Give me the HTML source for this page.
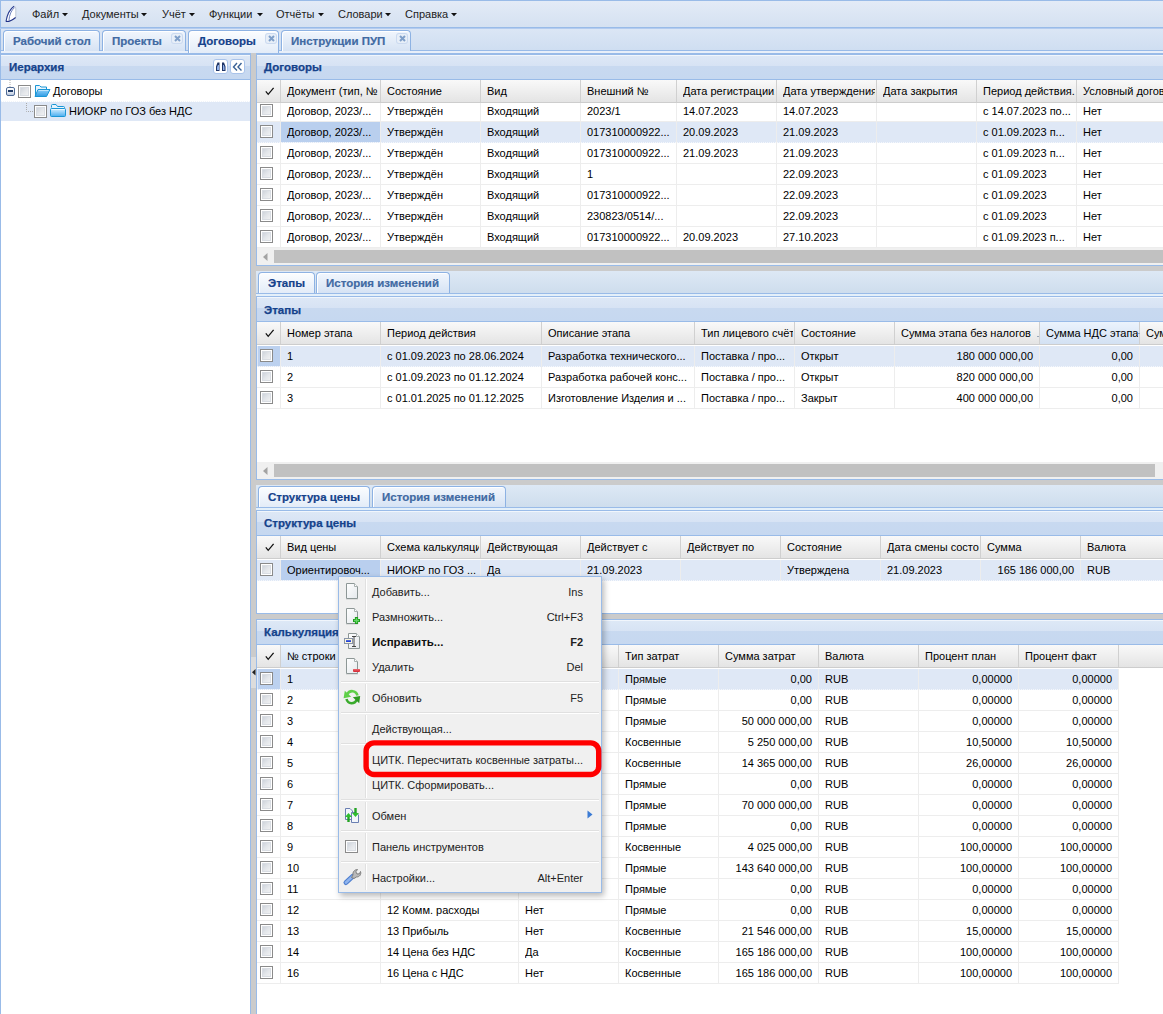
<!DOCTYPE html>
<html><head><meta charset="utf-8"><title>ui</title>
<style>
html,body{margin:0;padding:0;}
body{width:1163px;height:1014px;overflow:hidden;position:relative;background:#fff;font-family:"Liberation Sans",sans-serif;font-size:11px;color:#000;}
body>div{position:absolute;}
.t{line-height:13px;white-space:nowrap;}
.clip{overflow:hidden;}
</style></head><body>
<svg width="0" height="0" style="position:absolute"><defs><linearGradient id="fg" x1="0" y1="0" x2="0" y2="1"><stop offset="0" stop-color="#8fd0fb"/><stop offset="1" stop-color="#2f9be3"/></linearGradient><linearGradient id="fg2" x1="0" y1="0" x2="0" y2="1"><stop offset="0" stop-color="#d8efff"/><stop offset="1" stop-color="#4aaef0"/></linearGradient><linearGradient id="dg" x1="0" y1="0" x2="1" y2="1"><stop offset="0" stop-color="#ffffff"/><stop offset="1" stop-color="#e4e8ec"/></linearGradient></defs></svg>
<div style="left:0px;top:0px;width:1163px;height:27px;background:linear-gradient(#e3ebf7,#d5e1f1);border-top:1px solid #99bbe8;border-left:1px solid #99bbe8;box-sizing:border-box"></div>
<div style="left:0px;top:27px;width:1163px;height:1px;background:#99bbe8"></div>
<div style="left:0px;top:28px;width:1163px;height:1px;background:#b3cbef"></div>
<svg style="position:absolute;left:0px;top:0px" width="20" height="26" viewBox="0 0 20 26"><path d="M6 21.5C7 15 10 9 14 6.2C15.5 6.2 15.8 7.5 15.8 9V17.5C14 19.8 10 21.5 6 21.5Z" fill="#fff" stroke="#b9c2d2" stroke-width="0.9"/><path d="M6 21.5C7 15 10 9 14 6.2" fill="none" stroke="#2a3d92" stroke-width="1.1"/><path d="M9 20.2C9.3 15 11.3 10.2 14.6 7.5" fill="none" stroke="#4a63b0" stroke-width="0.8"/><path d="M6 21.5C9 21.8 12 20.5 15.6 17.5" fill="none" stroke="#1e2f86" stroke-width="1.1"/></svg>
<div class="t" style="left:32px;top:8px;color:#222;">Файл</div>
<div class="t" style="left:82px;top:8px;color:#222;">Документы</div>
<div class="t" style="left:162px;top:8px;color:#222;">Учёт</div>
<div class="t" style="left:209px;top:8px;color:#222;">Функции</div>
<div class="t" style="left:276px;top:8px;color:#222;">Отчёты</div>
<div class="t" style="left:338px;top:8px;color:#222;">Словари</div>
<div class="t" style="left:405px;top:8px;color:#222;">Справка</div>
<svg style="position:absolute;left:62px;top:13px" width="7" height="4"><path d="M0 0H6L3 3.2Z" fill="#111"/></svg>
<svg style="position:absolute;left:141px;top:13px" width="7" height="4"><path d="M0 0H6L3 3.2Z" fill="#111"/></svg>
<svg style="position:absolute;left:189px;top:13px" width="7" height="4"><path d="M0 0H6L3 3.2Z" fill="#111"/></svg>
<svg style="position:absolute;left:257px;top:13px" width="7" height="4"><path d="M0 0H6L3 3.2Z" fill="#111"/></svg>
<svg style="position:absolute;left:318px;top:13px" width="7" height="4"><path d="M0 0H6L3 3.2Z" fill="#111"/></svg>
<svg style="position:absolute;left:385px;top:13px" width="7" height="4"><path d="M0 0H6L3 3.2Z" fill="#111"/></svg>
<svg style="position:absolute;left:451px;top:13px" width="7" height="4"><path d="M0 0H6L3 3.2Z" fill="#111"/></svg>
<div style="left:0px;top:29px;width:1163px;height:21px;background:linear-gradient(#dbe6f5,#cfdef1);border-left:1px solid #99bbe8;box-sizing:border-box"></div>
<div style="left:0px;top:50px;width:1163px;height:1px;background:#99bbe8"></div>
<div style="left:0px;top:51px;width:1163px;height:2px;background:#e8eff9;border-left:1px solid #99bbe8;box-sizing:border-box"></div>
<div style="left:3px;top:30px;width:97px;height:21px;background:linear-gradient(#f1f6fd,#d6e3f4);border:1px solid #8db2e3;border-bottom:none;border-radius:4px 4px 0 0;box-sizing:border-box;box-shadow:inset 1px 1px 0 #fff"></div>
<div class="t" style="left:13px;top:35px;font-weight:bold;font-size:11.5px;color:#416aa3;-webkit-text-stroke:0.2px #416aa3;">Рабочий стол</div>
<div style="left:102px;top:30px;width:84px;height:21px;background:linear-gradient(#f1f6fd,#d6e3f4);border:1px solid #8db2e3;border-bottom:none;border-radius:4px 4px 0 0;box-sizing:border-box;box-shadow:inset 1px 1px 0 #fff"></div>
<div class="t" style="left:112px;top:35px;font-weight:bold;font-size:11.5px;color:#416aa3;-webkit-text-stroke:0.2px #416aa3;">Проекты</div>
<div style="left:172px;top:34px;width:10px;height:9px;border-radius:2px;background:#e8eff8;box-shadow:0 0 0 1px #cbdaf0"></div><svg style="position:absolute;left:174px;top:35px" width="7" height="7"><path d="M1 1L6 6M6 1L1 6" stroke="#7f9fc9" stroke-width="2"/></svg>
<div style="left:188px;top:30px;width:91px;height:23px;background:linear-gradient(#fbfdff,#e3ecf8);border:1px solid #8db2e3;border-bottom:none;border-radius:4px 4px 0 0;box-sizing:border-box;box-shadow:inset 1px 1px 0 #fff"></div>
<div class="t" style="left:198px;top:35px;font-weight:bold;font-size:11.5px;color:#15428b;-webkit-text-stroke:0.2px #15428b;">Договоры</div>
<div style="left:266px;top:34px;width:10px;height:9px;border-radius:2px;background:#e8eff8;box-shadow:0 0 0 1px #cbdaf0"></div><svg style="position:absolute;left:268px;top:35px" width="7" height="7"><path d="M1 1L6 6M6 1L1 6" stroke="#7f9fc9" stroke-width="2"/></svg>
<div style="left:281px;top:30px;width:130px;height:21px;background:linear-gradient(#f1f6fd,#d6e3f4);border:1px solid #8db2e3;border-bottom:none;border-radius:4px 4px 0 0;box-sizing:border-box;box-shadow:inset 1px 1px 0 #fff"></div>
<div class="t" style="left:291px;top:35px;font-weight:bold;font-size:11.5px;color:#416aa3;-webkit-text-stroke:0.2px #416aa3;">Инструкции ПУП</div>
<div style="left:397px;top:34px;width:10px;height:9px;border-radius:2px;background:#e8eff8;box-shadow:0 0 0 1px #cbdaf0"></div><svg style="position:absolute;left:399px;top:35px" width="7" height="7"><path d="M1 1L6 6M6 1L1 6" stroke="#7f9fc9" stroke-width="2"/></svg>
<div style="left:251px;top:53px;width:5px;height:961px;background:#cbcbcb"></div>
<div style="left:0px;top:53px;width:251px;height:961px;background:#fff;border-left:1px solid #99bbe8;border-right:1px solid #99bbe8;box-sizing:border-box"></div>
<div style="left:1px;top:53px;width:249px;height:2px;background:#99bbe8"></div>
<div style="left:1px;top:55px;width:249px;height:1px;background:#f1f6fc"></div>
<div style="left:1px;top:56px;width:249px;height:23px;background:linear-gradient(#dde8f6 0px,#d7e3f4 10px,#c8d9f0 10px,#c6d8f0 23px)"></div>
<div style="left:1px;top:79px;width:249px;height:1px;background:#99bbe8"></div>
<div class="t" style="left:9px;top:61px;font-weight:bold;font-size:11.5px;color:#15428b;-webkit-text-stroke:0.25px #15428b;">Иерархия</div>
<div style="left:213px;top:59px;width:15px;height:15px;background:#fff;border:1px solid #a9c3ea;border-radius:3px;box-sizing:border-box"></div>
<div style="left:230px;top:59px;width:15px;height:15px;background:#fff;border:1px solid #a9c3ea;border-radius:3px;box-sizing:border-box"></div>
<svg style="position:absolute;left:215px;top:61px" width="12" height="11" viewBox="0 0 12 11"><path d="M1 10V5.5L2.5 1.5H4.5V10Z M7 10V1.5H9L10.5 5.5V10Z" fill="#1f3566"/><path d="M2 9V6L3 4H4V9Z M8 9V4H8.8L9.5 6V9Z" fill="#8fb0ea"/></svg>
<svg style="position:absolute;left:232px;top:62px" width="11" height="10" viewBox="0 0 11 10"><path d="M5 1L1.5 5L5 8.5M9.5 1L6 5L9.5 8.5" fill="none" stroke="#3a6296" stroke-width="1.4"/></svg>
<div style="left:1px;top:101px;width:249px;height:1px;background:repeating-linear-gradient(90deg,#f0f4fa 0 1px,#fff 1px 2px)"></div>
<div style="left:1px;top:102px;width:249px;height:19px;background:#dfe8f6"></div>
<svg style="position:absolute;left:5px;top:80px" width="60" height="40"><path d="M5 0V7" stroke="#aaa" stroke-dasharray="1 1"/><path d="M21.5 23V31.5H28" stroke="#aaa" stroke-dasharray="1 1" fill="none"/></svg>
<div style="left:6px;top:87px;width:9px;height:9px;background:linear-gradient(#ffffff,#e9eef6 50%,#b9c8de);border:1px solid #4f6b96;border-radius:2px;box-sizing:border-box"></div>
<div style="left:8px;top:90px;width:5px;height:2px;background:#1f3a66"></div>
<div style="left:18px;top:85px;width:13px;height:13px;border:1px solid #8a8a8a;box-sizing:border-box;background:linear-gradient(135deg,#c3c9d3 0%,#e3e6ea 50%,#f7f7f7 100%);box-shadow:inset 0 0 0 1px #fff,inset 0 0 0 2px #d9dde3"></div>
<svg style="position:absolute;left:34px;top:84px" width="17" height="14" viewBox="0 0 17 14"><path d="M1.5 12.5V1.5H5.5L7 3H12.5V5" fill="#e6f4fd" stroke="#1a96d6"/><path d="M4 5.5H16L12.5 12.5H1Z" fill="url(#fg)" stroke="#1a96d6" stroke-linejoin="round"/><path d="M4.5 6.5H14.5" stroke="#bfe6fd"/></svg>
<div class="t" style="left:53px;top:85px;">Договоры</div>
<div style="left:34px;top:105px;width:13px;height:13px;border:1px solid #8a8a8a;box-sizing:border-box;background:linear-gradient(135deg,#c3c9d3 0%,#e3e6ea 50%,#f7f7f7 100%);box-shadow:inset 0 0 0 1px #fff,inset 0 0 0 2px #d9dde3"></div>
<svg style="position:absolute;left:50px;top:104px" width="17" height="14" viewBox="0 0 17 14"><path d="M1.5 3.5V1.5Q1.5 0.5 2.5 0.5H6L7.5 2.5H13.5Q14.5 2.5 14.5 3.5V4.5" fill="#e6f4fd" stroke="#1a96d6"/><rect x="0.5" y="4.5" width="15" height="8" rx="1" fill="url(#fg2)" stroke="#1a96d6"/><path d="M1.5 5.5H14.5" stroke="#eaf7ff"/></svg>
<div class="t" style="left:69px;top:105px;">НИОКР по ГОЗ без НДС</div>
<div style="left:256px;top:53px;width:907px;height:213px;background:#fff;border-left:1px solid #99bbe8;border-bottom:1px solid #99bbe8;box-sizing:border-box"></div>
<div style="left:257px;top:53px;width:906px;height:2px;background:#99bbe8"></div>
<div style="left:257px;top:55px;width:906px;height:1px;background:#f1f6fc"></div>
<div style="left:257px;top:56px;width:906px;height:23px;background:linear-gradient(#dde8f6 0px,#d7e3f4 10px,#c8d9f0 10px,#c6d8f0 23px)"></div>
<div style="left:257px;top:79px;width:906px;height:1px;background:#99bbe8"></div>
<div class="t" style="left:264px;top:61px;font-weight:bold;font-size:11.5px;color:#15428b;-webkit-text-stroke:0.25px #15428b;">Договоры</div>
<div style="left:257px;top:80px;width:906px;height:22px;background:linear-gradient(#f9f9f9,#e4e4e4)"></div>
<div style="left:257px;top:102px;width:906px;height:1px;background:#cdcdcd"></div>
<svg style="position:absolute;left:265px;top:87px" width="10" height="9" viewBox="0 0 10 9"><path d="M0.8 4.4L3.2 7.3L8.6 0.9" fill="none" stroke="#111" stroke-width="1.3"/></svg>
<div style="left:280px;top:80px;width:1px;height:22px;background:#d0d0d0"></div>
<div style="left:380px;top:80px;width:1px;height:22px;background:#d0d0d0"></div>
<div class="t clip" style="left:287px;top:85px;width:92px">Документ (тип, №</div>
<div style="left:480px;top:80px;width:1px;height:22px;background:#d0d0d0"></div>
<div class="t clip" style="left:387px;top:85px;width:92px">Состояние</div>
<div style="left:580px;top:80px;width:1px;height:22px;background:#d0d0d0"></div>
<div class="t clip" style="left:487px;top:85px;width:92px">Вид</div>
<div style="left:676px;top:80px;width:1px;height:22px;background:#d0d0d0"></div>
<div class="t clip" style="left:587px;top:85px;width:88px">Внешний №</div>
<div style="left:776px;top:80px;width:1px;height:22px;background:#d0d0d0"></div>
<div class="t clip" style="left:683px;top:85px;width:92px">Дата регистрации...</div>
<div style="left:876px;top:80px;width:1px;height:22px;background:#d0d0d0"></div>
<div class="t clip" style="left:783px;top:85px;width:92px">Дата утверждения</div>
<div style="left:976px;top:80px;width:1px;height:22px;background:#d0d0d0"></div>
<div class="t clip" style="left:883px;top:85px;width:92px">Дата закрытия</div>
<div style="left:1076px;top:80px;width:1px;height:22px;background:#d0d0d0"></div>
<div class="t clip" style="left:983px;top:85px;width:92px">Период действия...</div>
<div style="left:1176px;top:80px;width:1px;height:22px;background:#d0d0d0"></div>
<div class="t clip" style="left:1083px;top:85px;width:92px">Условный договор</div>
<div style="left:257px;top:121px;width:906px;height:1px;background:#ededed"></div>
<div style="left:280px;top:103px;width:1px;height:19px;background:#ededed"></div>
<div style="left:380px;top:103px;width:1px;height:19px;background:#ededed"></div>
<div style="left:480px;top:103px;width:1px;height:19px;background:#ededed"></div>
<div style="left:580px;top:103px;width:1px;height:19px;background:#ededed"></div>
<div style="left:676px;top:103px;width:1px;height:19px;background:#ededed"></div>
<div style="left:776px;top:103px;width:1px;height:19px;background:#ededed"></div>
<div style="left:876px;top:103px;width:1px;height:19px;background:#ededed"></div>
<div style="left:976px;top:103px;width:1px;height:19px;background:#ededed"></div>
<div style="left:1076px;top:103px;width:1px;height:19px;background:#ededed"></div>
<div style="left:260px;top:104px;width:13px;height:13px;border:1px solid #8a8a8a;box-sizing:border-box;background:linear-gradient(135deg,#c3c9d3 0%,#e3e6ea 50%,#f7f7f7 100%);box-shadow:inset 0 0 0 1px #fff,inset 0 0 0 2px #d9dde3"></div>
<div class="t clip" style="left:287px;top:105px;width:92px">Договор, 2023/...</div>
<div class="t clip" style="left:387px;top:105px;width:92px">Утверждён</div>
<div class="t clip" style="left:487px;top:105px;width:92px">Входящий</div>
<div class="t clip" style="left:587px;top:105px;width:88px">2023/1</div>
<div class="t clip" style="left:683px;top:105px;width:92px">14.07.2023</div>
<div class="t clip" style="left:783px;top:105px;width:92px">14.07.2023</div>
<div class="t clip" style="left:983px;top:105px;width:92px">с 14.07.2023 по...</div>
<div class="t clip" style="left:1083px;top:105px;width:92px">Нет</div>
<div style="left:257px;top:122px;width:906px;height:20px;background:#dfe8f6"></div>
<div style="left:257px;top:142px;width:906px;height:1px;background:repeating-linear-gradient(90deg,#f4f7fc 0 1px,#dfe8f6 1px 2px)"></div>
<div style="left:281px;top:122px;width:99px;height:20px;background:#b9cfee"></div>
<div style="left:280px;top:122px;width:1px;height:21px;background:#ededed"></div>
<div style="left:380px;top:122px;width:1px;height:21px;background:#ededed"></div>
<div style="left:480px;top:122px;width:1px;height:21px;background:#ededed"></div>
<div style="left:580px;top:122px;width:1px;height:21px;background:#ededed"></div>
<div style="left:676px;top:122px;width:1px;height:21px;background:#ededed"></div>
<div style="left:776px;top:122px;width:1px;height:21px;background:#ededed"></div>
<div style="left:876px;top:122px;width:1px;height:21px;background:#ededed"></div>
<div style="left:976px;top:122px;width:1px;height:21px;background:#ededed"></div>
<div style="left:1076px;top:122px;width:1px;height:21px;background:#ededed"></div>
<div style="left:260px;top:125px;width:13px;height:13px;border:1px solid #8a8a8a;box-sizing:border-box;background:linear-gradient(135deg,#c3c9d3 0%,#e3e6ea 50%,#f7f7f7 100%);box-shadow:inset 0 0 0 1px #fff,inset 0 0 0 2px #d9dde3"></div>
<div class="t clip" style="left:287px;top:126px;width:92px">Договор, 2023/...</div>
<div class="t clip" style="left:387px;top:126px;width:92px">Утверждён</div>
<div class="t clip" style="left:487px;top:126px;width:92px">Входящий</div>
<div class="t clip" style="left:587px;top:126px;width:88px">017310000922...</div>
<div class="t clip" style="left:683px;top:126px;width:92px">20.09.2023</div>
<div class="t clip" style="left:783px;top:126px;width:92px">21.09.2023</div>
<div class="t clip" style="left:983px;top:126px;width:92px">с 01.09.2023 п...</div>
<div class="t clip" style="left:1083px;top:126px;width:92px">Нет</div>
<div style="left:257px;top:163px;width:906px;height:1px;background:#ededed"></div>
<div style="left:280px;top:143px;width:1px;height:21px;background:#ededed"></div>
<div style="left:380px;top:143px;width:1px;height:21px;background:#ededed"></div>
<div style="left:480px;top:143px;width:1px;height:21px;background:#ededed"></div>
<div style="left:580px;top:143px;width:1px;height:21px;background:#ededed"></div>
<div style="left:676px;top:143px;width:1px;height:21px;background:#ededed"></div>
<div style="left:776px;top:143px;width:1px;height:21px;background:#ededed"></div>
<div style="left:876px;top:143px;width:1px;height:21px;background:#ededed"></div>
<div style="left:976px;top:143px;width:1px;height:21px;background:#ededed"></div>
<div style="left:1076px;top:143px;width:1px;height:21px;background:#ededed"></div>
<div style="left:260px;top:146px;width:13px;height:13px;border:1px solid #8a8a8a;box-sizing:border-box;background:linear-gradient(135deg,#c3c9d3 0%,#e3e6ea 50%,#f7f7f7 100%);box-shadow:inset 0 0 0 1px #fff,inset 0 0 0 2px #d9dde3"></div>
<div class="t clip" style="left:287px;top:147px;width:92px">Договор, 2023/...</div>
<div class="t clip" style="left:387px;top:147px;width:92px">Утверждён</div>
<div class="t clip" style="left:487px;top:147px;width:92px">Входящий</div>
<div class="t clip" style="left:587px;top:147px;width:88px">017310000922...</div>
<div class="t clip" style="left:683px;top:147px;width:92px">21.09.2023</div>
<div class="t clip" style="left:783px;top:147px;width:92px">21.09.2023</div>
<div class="t clip" style="left:983px;top:147px;width:92px">с 01.09.2023 п...</div>
<div class="t clip" style="left:1083px;top:147px;width:92px">Нет</div>
<div style="left:257px;top:184px;width:906px;height:1px;background:#ededed"></div>
<div style="left:280px;top:164px;width:1px;height:21px;background:#ededed"></div>
<div style="left:380px;top:164px;width:1px;height:21px;background:#ededed"></div>
<div style="left:480px;top:164px;width:1px;height:21px;background:#ededed"></div>
<div style="left:580px;top:164px;width:1px;height:21px;background:#ededed"></div>
<div style="left:676px;top:164px;width:1px;height:21px;background:#ededed"></div>
<div style="left:776px;top:164px;width:1px;height:21px;background:#ededed"></div>
<div style="left:876px;top:164px;width:1px;height:21px;background:#ededed"></div>
<div style="left:976px;top:164px;width:1px;height:21px;background:#ededed"></div>
<div style="left:1076px;top:164px;width:1px;height:21px;background:#ededed"></div>
<div style="left:260px;top:167px;width:13px;height:13px;border:1px solid #8a8a8a;box-sizing:border-box;background:linear-gradient(135deg,#c3c9d3 0%,#e3e6ea 50%,#f7f7f7 100%);box-shadow:inset 0 0 0 1px #fff,inset 0 0 0 2px #d9dde3"></div>
<div class="t clip" style="left:287px;top:168px;width:92px">Договор, 2023/...</div>
<div class="t clip" style="left:387px;top:168px;width:92px">Утверждён</div>
<div class="t clip" style="left:487px;top:168px;width:92px">Входящий</div>
<div class="t clip" style="left:587px;top:168px;width:88px">1</div>
<div class="t clip" style="left:783px;top:168px;width:92px">22.09.2023</div>
<div class="t clip" style="left:983px;top:168px;width:92px">с 01.09.2023</div>
<div class="t clip" style="left:1083px;top:168px;width:92px">Нет</div>
<div style="left:257px;top:205px;width:906px;height:1px;background:#ededed"></div>
<div style="left:280px;top:185px;width:1px;height:21px;background:#ededed"></div>
<div style="left:380px;top:185px;width:1px;height:21px;background:#ededed"></div>
<div style="left:480px;top:185px;width:1px;height:21px;background:#ededed"></div>
<div style="left:580px;top:185px;width:1px;height:21px;background:#ededed"></div>
<div style="left:676px;top:185px;width:1px;height:21px;background:#ededed"></div>
<div style="left:776px;top:185px;width:1px;height:21px;background:#ededed"></div>
<div style="left:876px;top:185px;width:1px;height:21px;background:#ededed"></div>
<div style="left:976px;top:185px;width:1px;height:21px;background:#ededed"></div>
<div style="left:1076px;top:185px;width:1px;height:21px;background:#ededed"></div>
<div style="left:260px;top:188px;width:13px;height:13px;border:1px solid #8a8a8a;box-sizing:border-box;background:linear-gradient(135deg,#c3c9d3 0%,#e3e6ea 50%,#f7f7f7 100%);box-shadow:inset 0 0 0 1px #fff,inset 0 0 0 2px #d9dde3"></div>
<div class="t clip" style="left:287px;top:189px;width:92px">Договор, 2023/...</div>
<div class="t clip" style="left:387px;top:189px;width:92px">Утверждён</div>
<div class="t clip" style="left:487px;top:189px;width:92px">Входящий</div>
<div class="t clip" style="left:587px;top:189px;width:88px">017310000922...</div>
<div class="t clip" style="left:783px;top:189px;width:92px">22.09.2023</div>
<div class="t clip" style="left:983px;top:189px;width:92px">с 01.09.2023</div>
<div class="t clip" style="left:1083px;top:189px;width:92px">Нет</div>
<div style="left:257px;top:226px;width:906px;height:1px;background:#ededed"></div>
<div style="left:280px;top:206px;width:1px;height:21px;background:#ededed"></div>
<div style="left:380px;top:206px;width:1px;height:21px;background:#ededed"></div>
<div style="left:480px;top:206px;width:1px;height:21px;background:#ededed"></div>
<div style="left:580px;top:206px;width:1px;height:21px;background:#ededed"></div>
<div style="left:676px;top:206px;width:1px;height:21px;background:#ededed"></div>
<div style="left:776px;top:206px;width:1px;height:21px;background:#ededed"></div>
<div style="left:876px;top:206px;width:1px;height:21px;background:#ededed"></div>
<div style="left:976px;top:206px;width:1px;height:21px;background:#ededed"></div>
<div style="left:1076px;top:206px;width:1px;height:21px;background:#ededed"></div>
<div style="left:260px;top:209px;width:13px;height:13px;border:1px solid #8a8a8a;box-sizing:border-box;background:linear-gradient(135deg,#c3c9d3 0%,#e3e6ea 50%,#f7f7f7 100%);box-shadow:inset 0 0 0 1px #fff,inset 0 0 0 2px #d9dde3"></div>
<div class="t clip" style="left:287px;top:210px;width:92px">Договор, 2023/...</div>
<div class="t clip" style="left:387px;top:210px;width:92px">Утверждён</div>
<div class="t clip" style="left:487px;top:210px;width:92px">Входящий</div>
<div class="t clip" style="left:587px;top:210px;width:88px">230823/0514/...</div>
<div class="t clip" style="left:783px;top:210px;width:92px">22.09.2023</div>
<div class="t clip" style="left:983px;top:210px;width:92px">с 01.09.2023</div>
<div class="t clip" style="left:1083px;top:210px;width:92px">Нет</div>
<div style="left:257px;top:247px;width:906px;height:1px;background:#ededed"></div>
<div style="left:280px;top:227px;width:1px;height:21px;background:#ededed"></div>
<div style="left:380px;top:227px;width:1px;height:21px;background:#ededed"></div>
<div style="left:480px;top:227px;width:1px;height:21px;background:#ededed"></div>
<div style="left:580px;top:227px;width:1px;height:21px;background:#ededed"></div>
<div style="left:676px;top:227px;width:1px;height:21px;background:#ededed"></div>
<div style="left:776px;top:227px;width:1px;height:21px;background:#ededed"></div>
<div style="left:876px;top:227px;width:1px;height:21px;background:#ededed"></div>
<div style="left:976px;top:227px;width:1px;height:21px;background:#ededed"></div>
<div style="left:1076px;top:227px;width:1px;height:21px;background:#ededed"></div>
<div style="left:260px;top:230px;width:13px;height:13px;border:1px solid #8a8a8a;box-sizing:border-box;background:linear-gradient(135deg,#c3c9d3 0%,#e3e6ea 50%,#f7f7f7 100%);box-shadow:inset 0 0 0 1px #fff,inset 0 0 0 2px #d9dde3"></div>
<div class="t clip" style="left:287px;top:231px;width:92px">Договор, 2023/...</div>
<div class="t clip" style="left:387px;top:231px;width:92px">Утверждён</div>
<div class="t clip" style="left:487px;top:231px;width:92px">Входящий</div>
<div class="t clip" style="left:587px;top:231px;width:88px">017310000922...</div>
<div class="t clip" style="left:683px;top:231px;width:92px">20.09.2023</div>
<div class="t clip" style="left:783px;top:231px;width:92px">27.10.2023</div>
<div class="t clip" style="left:983px;top:231px;width:92px">с 01.09.2023 п...</div>
<div class="t clip" style="left:1083px;top:231px;width:92px">Нет</div>
<div style="left:257px;top:248px;width:906px;height:17px;background:#f0f0f0"></div>
<svg style="position:absolute;left:263px;top:253px" width="5" height="8"><path d="M4.5 0V8L0 4Z" fill="#a3a3a3"/></svg>
<div style="left:274px;top:250px;width:889px;height:13px;background:#c1c1c1"></div>
<div style="left:256px;top:266px;width:907px;height:5px;background:#cbcbcb"></div>
<div style="left:256px;top:271px;width:907px;height:22px;background:linear-gradient(#dde8f5,#cedded)"></div>
<div style="left:256px;top:293px;width:907px;height:1px;background:#99bbe8"></div>
<div style="left:256px;top:294px;width:907px;height:2px;background:#e4f0fa"></div>
<div style="left:258px;top:272px;width:57px;height:21px;background:linear-gradient(#fbfdff,#e3ecf8);border:1px solid #8db2e3;border-bottom:none;border-radius:4px 4px 0 0;box-sizing:border-box;box-shadow:inset 1px 1px 0 #fff"></div>
<div class="t" style="left:268px;top:277px;font-weight:bold;font-size:11.5px;color:#15428b;-webkit-text-stroke:0.2px #15428b;">Этапы</div>
<div style="left:316px;top:272px;width:134px;height:21px;background:linear-gradient(#f1f6fd,#d6e3f4);border:1px solid #8db2e3;border-bottom:none;border-radius:4px 4px 0 0;box-sizing:border-box;box-shadow:inset 1px 1px 0 #fff"></div>
<div class="t" style="left:326px;top:277px;font-weight:bold;font-size:11.5px;color:#416aa3;-webkit-text-stroke:0.2px #416aa3;">История изменений</div>
<div style="left:256px;top:293px;width:907px;height:1px;background:#99bbe8"></div>
<div style="left:256px;top:296px;width:907px;height:184px;background:#fff;border-left:1px solid #99bbe8;border-bottom:1px solid #99bbe8;box-sizing:border-box"></div>
<div style="left:257px;top:296px;width:906px;height:1px;background:#99bbe8"></div>
<div style="left:257px;top:297px;width:906px;height:1px;background:#f1f6fc"></div>
<div style="left:257px;top:298px;width:906px;height:23px;background:linear-gradient(#dde8f6 0px,#d7e3f4 10px,#c8d9f0 10px,#c6d8f0 23px)"></div>
<div style="left:257px;top:321px;width:906px;height:1px;background:#99bbe8"></div>
<div class="t" style="left:264px;top:304px;font-weight:bold;font-size:11.5px;color:#15428b;-webkit-text-stroke:0.25px #15428b;">Этапы</div>
<div style="left:257px;top:322px;width:906px;height:22px;background:linear-gradient(#f9f9f9,#e4e4e4)"></div>
<div style="left:257px;top:344px;width:906px;height:1px;background:#cdcdcd"></div>
<svg style="position:absolute;left:265px;top:329px" width="10" height="9" viewBox="0 0 10 9"><path d="M0.8 4.4L3.2 7.3L8.6 0.9" fill="none" stroke="#111" stroke-width="1.3"/></svg>
<div style="left:280px;top:322px;width:1px;height:22px;background:#d0d0d0"></div>
<div style="left:380px;top:322px;width:1px;height:22px;background:#d0d0d0"></div>
<div class="t clip" style="left:287px;top:327px;width:92px">Номер этапа</div>
<div style="left:541px;top:322px;width:1px;height:22px;background:#d0d0d0"></div>
<div class="t clip" style="left:387px;top:327px;width:153px">Период действия</div>
<div style="left:694px;top:322px;width:1px;height:22px;background:#d0d0d0"></div>
<div class="t clip" style="left:548px;top:327px;width:145px">Описание этапа</div>
<div style="left:794px;top:322px;width:1px;height:22px;background:#d0d0d0"></div>
<div class="t clip" style="left:701px;top:327px;width:92px">Тип лицевого счёт</div>
<div style="left:894px;top:322px;width:1px;height:22px;background:#d0d0d0"></div>
<div class="t clip" style="left:801px;top:327px;width:92px">Состояние</div>
<div style="left:1039px;top:322px;width:1px;height:22px;background:#d0d0d0"></div>
<div class="t clip" style="left:901px;top:327px;width:137px">Сумма этапа без налогов</div>
<div style="left:1040px;top:322px;width:99px;height:22px;background:linear-gradient(#ebf3fd,#d3e1f3)"></div>
<div style="left:1139px;top:322px;width:1px;height:22px;background:#d0d0d0"></div>
<div class="t clip" style="left:1046px;top:327px;width:92px">Сумма НДС этапа</div>
<div style="left:1239px;top:322px;width:1px;height:22px;background:#d0d0d0"></div>
<div class="t clip" style="left:1146px;top:327px;width:92px">Сумма</div>
<div style="left:1037px;top:336px;width:2px;height:1px;background:#9aa6b8"></div>
<div style="left:1138px;top:333px;width:2px;height:1px;background:#9aa6b8"></div>
<div style="left:257px;top:346px;width:906px;height:20px;background:#dfe8f6"></div>
<div style="left:257px;top:366px;width:906px;height:1px;background:repeating-linear-gradient(90deg,#f4f7fc 0 1px,#dfe8f6 1px 2px)"></div>
<div style="left:258px;top:346px;width:22px;height:20px;background:#bcd1ef"></div>
<div style="left:280px;top:346px;width:1px;height:21px;background:#ededed"></div>
<div style="left:380px;top:346px;width:1px;height:21px;background:#ededed"></div>
<div style="left:541px;top:346px;width:1px;height:21px;background:#ededed"></div>
<div style="left:694px;top:346px;width:1px;height:21px;background:#ededed"></div>
<div style="left:794px;top:346px;width:1px;height:21px;background:#ededed"></div>
<div style="left:894px;top:346px;width:1px;height:21px;background:#ededed"></div>
<div style="left:1039px;top:346px;width:1px;height:21px;background:#ededed"></div>
<div style="left:1139px;top:346px;width:1px;height:21px;background:#ededed"></div>
<div style="left:260px;top:349px;width:13px;height:13px;border:1px solid #8a8a8a;box-sizing:border-box;background:linear-gradient(135deg,#c3c9d3 0%,#e3e6ea 50%,#f7f7f7 100%);box-shadow:inset 0 0 0 1px #fff,inset 0 0 0 2px #d9dde3"></div>
<div class="t clip" style="left:287px;top:350px;width:92px">1</div>
<div class="t clip" style="left:387px;top:350px;width:153px">с 01.09.2023 по 28.06.2024</div>
<div class="t clip" style="left:548px;top:350px;width:145px">Разработка технического...</div>
<div class="t clip" style="left:701px;top:350px;width:92px">Поставка / про...</div>
<div class="t clip" style="left:801px;top:350px;width:92px">Открыт</div>
<div class="t" style="left:894px;top:350px;width:139px;text-align:right">180 000 000,00</div>
<div class="t" style="left:1039px;top:350px;width:94px;text-align:right">0,00</div>
<div style="left:257px;top:387px;width:906px;height:1px;background:#ededed"></div>
<div style="left:280px;top:367px;width:1px;height:21px;background:#ededed"></div>
<div style="left:380px;top:367px;width:1px;height:21px;background:#ededed"></div>
<div style="left:541px;top:367px;width:1px;height:21px;background:#ededed"></div>
<div style="left:694px;top:367px;width:1px;height:21px;background:#ededed"></div>
<div style="left:794px;top:367px;width:1px;height:21px;background:#ededed"></div>
<div style="left:894px;top:367px;width:1px;height:21px;background:#ededed"></div>
<div style="left:1039px;top:367px;width:1px;height:21px;background:#ededed"></div>
<div style="left:1139px;top:367px;width:1px;height:21px;background:#ededed"></div>
<div style="left:260px;top:370px;width:13px;height:13px;border:1px solid #8a8a8a;box-sizing:border-box;background:linear-gradient(135deg,#c3c9d3 0%,#e3e6ea 50%,#f7f7f7 100%);box-shadow:inset 0 0 0 1px #fff,inset 0 0 0 2px #d9dde3"></div>
<div class="t clip" style="left:287px;top:371px;width:92px">2</div>
<div class="t clip" style="left:387px;top:371px;width:153px">с 01.09.2023 по 01.12.2024</div>
<div class="t clip" style="left:548px;top:371px;width:145px">Разработка рабочей конс...</div>
<div class="t clip" style="left:701px;top:371px;width:92px">Поставка / про...</div>
<div class="t clip" style="left:801px;top:371px;width:92px">Открыт</div>
<div class="t" style="left:894px;top:371px;width:139px;text-align:right">820 000 000,00</div>
<div class="t" style="left:1039px;top:371px;width:94px;text-align:right">0,00</div>
<div style="left:257px;top:408px;width:906px;height:1px;background:#ededed"></div>
<div style="left:280px;top:388px;width:1px;height:21px;background:#ededed"></div>
<div style="left:380px;top:388px;width:1px;height:21px;background:#ededed"></div>
<div style="left:541px;top:388px;width:1px;height:21px;background:#ededed"></div>
<div style="left:694px;top:388px;width:1px;height:21px;background:#ededed"></div>
<div style="left:794px;top:388px;width:1px;height:21px;background:#ededed"></div>
<div style="left:894px;top:388px;width:1px;height:21px;background:#ededed"></div>
<div style="left:1039px;top:388px;width:1px;height:21px;background:#ededed"></div>
<div style="left:1139px;top:388px;width:1px;height:21px;background:#ededed"></div>
<div style="left:260px;top:391px;width:13px;height:13px;border:1px solid #8a8a8a;box-sizing:border-box;background:linear-gradient(135deg,#c3c9d3 0%,#e3e6ea 50%,#f7f7f7 100%);box-shadow:inset 0 0 0 1px #fff,inset 0 0 0 2px #d9dde3"></div>
<div class="t clip" style="left:287px;top:392px;width:92px">3</div>
<div class="t clip" style="left:387px;top:392px;width:153px">с 01.01.2025 по 01.12.2025</div>
<div class="t clip" style="left:548px;top:392px;width:145px">Изготовление Изделия и ...</div>
<div class="t clip" style="left:701px;top:392px;width:92px">Поставка / про...</div>
<div class="t clip" style="left:801px;top:392px;width:92px">Закрыт</div>
<div class="t" style="left:894px;top:392px;width:139px;text-align:right">400 000 000,00</div>
<div class="t" style="left:1039px;top:392px;width:94px;text-align:right">0,00</div>
<div style="left:257px;top:462px;width:906px;height:17px;background:#f0f0f0"></div>
<svg style="position:absolute;left:263px;top:467px" width="5" height="8"><path d="M4.5 0V8L0 4Z" fill="#a3a3a3"/></svg>
<div style="left:274px;top:464px;width:881px;height:13px;background:#c1c1c1"></div>
<div style="left:256px;top:480px;width:907px;height:5px;background:#cbcbcb"></div>
<div style="left:256px;top:485px;width:907px;height:22px;background:linear-gradient(#dde8f5,#cedded)"></div>
<div style="left:256px;top:507px;width:907px;height:1px;background:#99bbe8"></div>
<div style="left:256px;top:508px;width:907px;height:2px;background:#e4f0fa"></div>
<div style="left:258px;top:486px;width:112px;height:21px;background:linear-gradient(#fbfdff,#e3ecf8);border:1px solid #8db2e3;border-bottom:none;border-radius:4px 4px 0 0;box-sizing:border-box;box-shadow:inset 1px 1px 0 #fff"></div>
<div class="t" style="left:268px;top:491px;font-weight:bold;font-size:11.5px;color:#15428b;-webkit-text-stroke:0.2px #15428b;">Структура цены</div>
<div style="left:372px;top:486px;width:134px;height:21px;background:linear-gradient(#f1f6fd,#d6e3f4);border:1px solid #8db2e3;border-bottom:none;border-radius:4px 4px 0 0;box-sizing:border-box;box-shadow:inset 1px 1px 0 #fff"></div>
<div class="t" style="left:382px;top:491px;font-weight:bold;font-size:11.5px;color:#416aa3;-webkit-text-stroke:0.2px #416aa3;">История изменений</div>
<div style="left:256px;top:507px;width:907px;height:1px;background:#99bbe8"></div>
<div style="left:256px;top:510px;width:907px;height:104px;background:#fff;border-left:1px solid #99bbe8;border-bottom:1px solid #99bbe8;box-sizing:border-box"></div>
<div style="left:257px;top:510px;width:906px;height:1px;background:#99bbe8"></div>
<div style="left:257px;top:511px;width:906px;height:1px;background:#f1f6fc"></div>
<div style="left:257px;top:512px;width:906px;height:23px;background:linear-gradient(#dde8f6 0px,#d7e3f4 10px,#c8d9f0 10px,#c6d8f0 23px)"></div>
<div style="left:257px;top:535px;width:906px;height:1px;background:#99bbe8"></div>
<div class="t" style="left:264px;top:517px;font-weight:bold;font-size:11.5px;color:#15428b;-webkit-text-stroke:0.25px #15428b;">Структура цены</div>
<div style="left:257px;top:536px;width:906px;height:22px;background:linear-gradient(#f9f9f9,#e4e4e4)"></div>
<div style="left:257px;top:558px;width:906px;height:1px;background:#cdcdcd"></div>
<svg style="position:absolute;left:265px;top:543px" width="10" height="9" viewBox="0 0 10 9"><path d="M0.8 4.4L3.2 7.3L8.6 0.9" fill="none" stroke="#111" stroke-width="1.3"/></svg>
<div style="left:280px;top:536px;width:1px;height:22px;background:#d0d0d0"></div>
<div style="left:380px;top:536px;width:1px;height:22px;background:#d0d0d0"></div>
<div class="t clip" style="left:287px;top:541px;width:92px">Вид цены</div>
<div style="left:480px;top:536px;width:1px;height:22px;background:#d0d0d0"></div>
<div class="t clip" style="left:387px;top:541px;width:92px">Схема калькуляции</div>
<div style="left:580px;top:536px;width:1px;height:22px;background:#d0d0d0"></div>
<div class="t clip" style="left:487px;top:541px;width:92px">Действующая</div>
<div style="left:680px;top:536px;width:1px;height:22px;background:#d0d0d0"></div>
<div class="t clip" style="left:587px;top:541px;width:92px">Действует с</div>
<div style="left:780px;top:536px;width:1px;height:22px;background:#d0d0d0"></div>
<div class="t clip" style="left:687px;top:541px;width:92px">Действует по</div>
<div style="left:880px;top:536px;width:1px;height:22px;background:#d0d0d0"></div>
<div class="t clip" style="left:787px;top:541px;width:92px">Состояние</div>
<div style="left:980px;top:536px;width:1px;height:22px;background:#d0d0d0"></div>
<div class="t clip" style="left:887px;top:541px;width:92px">Дата смены состояния</div>
<div style="left:1080px;top:536px;width:1px;height:22px;background:#d0d0d0"></div>
<div class="t clip" style="left:987px;top:541px;width:92px">Сумма</div>
<div style="left:1180px;top:536px;width:1px;height:22px;background:#d0d0d0"></div>
<div class="t clip" style="left:1087px;top:541px;width:92px">Валюта</div>
<div style="left:257px;top:560px;width:906px;height:20px;background:#dfe8f6"></div>
<div style="left:257px;top:580px;width:906px;height:1px;background:repeating-linear-gradient(90deg,#f4f7fc 0 1px,#dfe8f6 1px 2px)"></div>
<div style="left:281px;top:560px;width:99px;height:20px;background:#b9cfee"></div>
<div style="left:280px;top:560px;width:1px;height:21px;background:#ededed"></div>
<div style="left:380px;top:560px;width:1px;height:21px;background:#ededed"></div>
<div style="left:480px;top:560px;width:1px;height:21px;background:#ededed"></div>
<div style="left:580px;top:560px;width:1px;height:21px;background:#ededed"></div>
<div style="left:680px;top:560px;width:1px;height:21px;background:#ededed"></div>
<div style="left:780px;top:560px;width:1px;height:21px;background:#ededed"></div>
<div style="left:880px;top:560px;width:1px;height:21px;background:#ededed"></div>
<div style="left:980px;top:560px;width:1px;height:21px;background:#ededed"></div>
<div style="left:1080px;top:560px;width:1px;height:21px;background:#ededed"></div>
<div style="left:260px;top:563px;width:13px;height:13px;border:1px solid #8a8a8a;box-sizing:border-box;background:linear-gradient(135deg,#c3c9d3 0%,#e3e6ea 50%,#f7f7f7 100%);box-shadow:inset 0 0 0 1px #fff,inset 0 0 0 2px #d9dde3"></div>
<div class="t clip" style="left:287px;top:564px;width:92px">Ориентировоч...</div>
<div class="t clip" style="left:387px;top:564px;width:92px">НИОКР по ГОЗ ...</div>
<div class="t clip" style="left:487px;top:564px;width:92px">Да</div>
<div class="t clip" style="left:587px;top:564px;width:92px">21.09.2023</div>
<div class="t clip" style="left:787px;top:564px;width:92px">Утверждена</div>
<div class="t clip" style="left:887px;top:564px;width:92px">21.09.2023</div>
<div class="t" style="left:980px;top:564px;width:94px;text-align:right">165 186 000,00</div>
<div class="t clip" style="left:1087px;top:564px;width:92px">RUB</div>
<div style="left:256px;top:614px;width:907px;height:5px;background:#cbcbcb"></div>
<div style="left:256px;top:619px;width:907px;height:395px;background:#fff;border-left:1px solid #99bbe8;box-sizing:border-box"></div>
<div style="left:257px;top:619px;width:906px;height:1px;background:#99bbe8"></div>
<div style="left:257px;top:620px;width:906px;height:1px;background:#f1f6fc"></div>
<div style="left:257px;top:621px;width:906px;height:23px;background:linear-gradient(#dde8f6 0px,#d7e3f4 10px,#c8d9f0 10px,#c6d8f0 23px)"></div>
<div style="left:257px;top:644px;width:906px;height:1px;background:#99bbe8"></div>
<div class="t" style="left:264px;top:626px;font-weight:bold;font-size:11.5px;color:#15428b;-webkit-text-stroke:0.25px #15428b;">Калькуляция</div>
<div style="left:257px;top:645px;width:906px;height:22px;background:linear-gradient(#f9f9f9,#e4e4e4)"></div>
<div style="left:257px;top:667px;width:906px;height:1px;background:#cdcdcd"></div>
<svg style="position:absolute;left:265px;top:652px" width="10" height="9" viewBox="0 0 10 9"><path d="M0.8 4.4L3.2 7.3L8.6 0.9" fill="none" stroke="#111" stroke-width="1.3"/></svg>
<div style="left:280px;top:645px;width:1px;height:22px;background:#d0d0d0"></div>
<div style="left:281px;top:645px;width:99px;height:22px;background:linear-gradient(#ebf3fd,#d3e1f3)"></div>
<div style="left:380px;top:645px;width:1px;height:22px;background:#d0d0d0"></div>
<div class="t clip" style="left:287px;top:650px;width:92px">№ строки</div>
<div style="left:518px;top:645px;width:1px;height:22px;background:#d0d0d0"></div>
<div class="t clip" style="left:387px;top:650px;width:130px">Наименование</div>
<div style="left:618px;top:645px;width:1px;height:22px;background:#d0d0d0"></div>
<div class="t clip" style="left:525px;top:650px;width:92px">Итоговая</div>
<div style="left:718px;top:645px;width:1px;height:22px;background:#d0d0d0"></div>
<div class="t clip" style="left:625px;top:650px;width:92px">Тип затрат</div>
<div style="left:818px;top:645px;width:1px;height:22px;background:#d0d0d0"></div>
<div class="t clip" style="left:725px;top:650px;width:92px">Сумма затрат</div>
<div style="left:918px;top:645px;width:1px;height:22px;background:#d0d0d0"></div>
<div class="t clip" style="left:825px;top:650px;width:92px">Валюта</div>
<div style="left:1018px;top:645px;width:1px;height:22px;background:#d0d0d0"></div>
<div class="t clip" style="left:925px;top:650px;width:92px">Процент план</div>
<div style="left:1118px;top:645px;width:1px;height:22px;background:#d0d0d0"></div>
<div class="t clip" style="left:1025px;top:650px;width:92px">Процент факт</div>
<div style="left:257px;top:669px;width:861px;height:20px;background:#dfe8f6"></div>
<div style="left:257px;top:689px;width:861px;height:1px;background:repeating-linear-gradient(90deg,#f4f7fc 0 1px,#dfe8f6 1px 2px)"></div>
<div style="left:258px;top:669px;width:22px;height:20px;background:#bcd1ef"></div>
<div style="left:280px;top:669px;width:1px;height:21px;background:#ededed"></div>
<div style="left:380px;top:669px;width:1px;height:21px;background:#ededed"></div>
<div style="left:518px;top:669px;width:1px;height:21px;background:#ededed"></div>
<div style="left:618px;top:669px;width:1px;height:21px;background:#ededed"></div>
<div style="left:718px;top:669px;width:1px;height:21px;background:#ededed"></div>
<div style="left:818px;top:669px;width:1px;height:21px;background:#ededed"></div>
<div style="left:918px;top:669px;width:1px;height:21px;background:#ededed"></div>
<div style="left:1018px;top:669px;width:1px;height:21px;background:#ededed"></div>
<div style="left:1118px;top:669px;width:1px;height:21px;background:#ededed"></div>
<div style="left:260px;top:672px;width:13px;height:13px;border:1px solid #8a8a8a;box-sizing:border-box;background:linear-gradient(135deg,#c3c9d3 0%,#e3e6ea 50%,#f7f7f7 100%);box-shadow:inset 0 0 0 1px #fff,inset 0 0 0 2px #d9dde3"></div>
<div class="t clip" style="left:287px;top:673px;width:92px">1</div>
<div class="t clip" style="left:625px;top:673px;width:92px">Прямые</div>
<div class="t" style="left:718px;top:673px;width:94px;text-align:right">0,00</div>
<div class="t clip" style="left:825px;top:673px;width:92px">RUB</div>
<div class="t" style="left:918px;top:673px;width:94px;text-align:right">0,00000</div>
<div class="t" style="left:1018px;top:673px;width:94px;text-align:right">0,00000</div>
<div style="left:257px;top:710px;width:861px;height:1px;background:#ededed"></div>
<div style="left:280px;top:690px;width:1px;height:21px;background:#ededed"></div>
<div style="left:380px;top:690px;width:1px;height:21px;background:#ededed"></div>
<div style="left:518px;top:690px;width:1px;height:21px;background:#ededed"></div>
<div style="left:618px;top:690px;width:1px;height:21px;background:#ededed"></div>
<div style="left:718px;top:690px;width:1px;height:21px;background:#ededed"></div>
<div style="left:818px;top:690px;width:1px;height:21px;background:#ededed"></div>
<div style="left:918px;top:690px;width:1px;height:21px;background:#ededed"></div>
<div style="left:1018px;top:690px;width:1px;height:21px;background:#ededed"></div>
<div style="left:1118px;top:690px;width:1px;height:21px;background:#ededed"></div>
<div style="left:260px;top:693px;width:13px;height:13px;border:1px solid #8a8a8a;box-sizing:border-box;background:linear-gradient(135deg,#c3c9d3 0%,#e3e6ea 50%,#f7f7f7 100%);box-shadow:inset 0 0 0 1px #fff,inset 0 0 0 2px #d9dde3"></div>
<div class="t clip" style="left:287px;top:694px;width:92px">2</div>
<div class="t clip" style="left:625px;top:694px;width:92px">Прямые</div>
<div class="t" style="left:718px;top:694px;width:94px;text-align:right">0,00</div>
<div class="t clip" style="left:825px;top:694px;width:92px">RUB</div>
<div class="t" style="left:918px;top:694px;width:94px;text-align:right">0,00000</div>
<div class="t" style="left:1018px;top:694px;width:94px;text-align:right">0,00000</div>
<div style="left:257px;top:731px;width:861px;height:1px;background:#ededed"></div>
<div style="left:280px;top:711px;width:1px;height:21px;background:#ededed"></div>
<div style="left:380px;top:711px;width:1px;height:21px;background:#ededed"></div>
<div style="left:518px;top:711px;width:1px;height:21px;background:#ededed"></div>
<div style="left:618px;top:711px;width:1px;height:21px;background:#ededed"></div>
<div style="left:718px;top:711px;width:1px;height:21px;background:#ededed"></div>
<div style="left:818px;top:711px;width:1px;height:21px;background:#ededed"></div>
<div style="left:918px;top:711px;width:1px;height:21px;background:#ededed"></div>
<div style="left:1018px;top:711px;width:1px;height:21px;background:#ededed"></div>
<div style="left:1118px;top:711px;width:1px;height:21px;background:#ededed"></div>
<div style="left:260px;top:714px;width:13px;height:13px;border:1px solid #8a8a8a;box-sizing:border-box;background:linear-gradient(135deg,#c3c9d3 0%,#e3e6ea 50%,#f7f7f7 100%);box-shadow:inset 0 0 0 1px #fff,inset 0 0 0 2px #d9dde3"></div>
<div class="t clip" style="left:287px;top:715px;width:92px">3</div>
<div class="t clip" style="left:625px;top:715px;width:92px">Прямые</div>
<div class="t" style="left:718px;top:715px;width:94px;text-align:right">50 000 000,00</div>
<div class="t clip" style="left:825px;top:715px;width:92px">RUB</div>
<div class="t" style="left:918px;top:715px;width:94px;text-align:right">0,00000</div>
<div class="t" style="left:1018px;top:715px;width:94px;text-align:right">0,00000</div>
<div style="left:257px;top:752px;width:861px;height:1px;background:#ededed"></div>
<div style="left:280px;top:732px;width:1px;height:21px;background:#ededed"></div>
<div style="left:380px;top:732px;width:1px;height:21px;background:#ededed"></div>
<div style="left:518px;top:732px;width:1px;height:21px;background:#ededed"></div>
<div style="left:618px;top:732px;width:1px;height:21px;background:#ededed"></div>
<div style="left:718px;top:732px;width:1px;height:21px;background:#ededed"></div>
<div style="left:818px;top:732px;width:1px;height:21px;background:#ededed"></div>
<div style="left:918px;top:732px;width:1px;height:21px;background:#ededed"></div>
<div style="left:1018px;top:732px;width:1px;height:21px;background:#ededed"></div>
<div style="left:1118px;top:732px;width:1px;height:21px;background:#ededed"></div>
<div style="left:260px;top:735px;width:13px;height:13px;border:1px solid #8a8a8a;box-sizing:border-box;background:linear-gradient(135deg,#c3c9d3 0%,#e3e6ea 50%,#f7f7f7 100%);box-shadow:inset 0 0 0 1px #fff,inset 0 0 0 2px #d9dde3"></div>
<div class="t clip" style="left:287px;top:736px;width:92px">4</div>
<div class="t clip" style="left:625px;top:736px;width:92px">Косвенные</div>
<div class="t" style="left:718px;top:736px;width:94px;text-align:right">5 250 000,00</div>
<div class="t clip" style="left:825px;top:736px;width:92px">RUB</div>
<div class="t" style="left:918px;top:736px;width:94px;text-align:right">10,50000</div>
<div class="t" style="left:1018px;top:736px;width:94px;text-align:right">10,50000</div>
<div style="left:257px;top:773px;width:861px;height:1px;background:#ededed"></div>
<div style="left:280px;top:753px;width:1px;height:21px;background:#ededed"></div>
<div style="left:380px;top:753px;width:1px;height:21px;background:#ededed"></div>
<div style="left:518px;top:753px;width:1px;height:21px;background:#ededed"></div>
<div style="left:618px;top:753px;width:1px;height:21px;background:#ededed"></div>
<div style="left:718px;top:753px;width:1px;height:21px;background:#ededed"></div>
<div style="left:818px;top:753px;width:1px;height:21px;background:#ededed"></div>
<div style="left:918px;top:753px;width:1px;height:21px;background:#ededed"></div>
<div style="left:1018px;top:753px;width:1px;height:21px;background:#ededed"></div>
<div style="left:1118px;top:753px;width:1px;height:21px;background:#ededed"></div>
<div style="left:260px;top:756px;width:13px;height:13px;border:1px solid #8a8a8a;box-sizing:border-box;background:linear-gradient(135deg,#c3c9d3 0%,#e3e6ea 50%,#f7f7f7 100%);box-shadow:inset 0 0 0 1px #fff,inset 0 0 0 2px #d9dde3"></div>
<div class="t clip" style="left:287px;top:757px;width:92px">5</div>
<div class="t clip" style="left:625px;top:757px;width:92px">Косвенные</div>
<div class="t" style="left:718px;top:757px;width:94px;text-align:right">14 365 000,00</div>
<div class="t clip" style="left:825px;top:757px;width:92px">RUB</div>
<div class="t" style="left:918px;top:757px;width:94px;text-align:right">26,00000</div>
<div class="t" style="left:1018px;top:757px;width:94px;text-align:right">26,00000</div>
<div style="left:257px;top:794px;width:861px;height:1px;background:#ededed"></div>
<div style="left:280px;top:774px;width:1px;height:21px;background:#ededed"></div>
<div style="left:380px;top:774px;width:1px;height:21px;background:#ededed"></div>
<div style="left:518px;top:774px;width:1px;height:21px;background:#ededed"></div>
<div style="left:618px;top:774px;width:1px;height:21px;background:#ededed"></div>
<div style="left:718px;top:774px;width:1px;height:21px;background:#ededed"></div>
<div style="left:818px;top:774px;width:1px;height:21px;background:#ededed"></div>
<div style="left:918px;top:774px;width:1px;height:21px;background:#ededed"></div>
<div style="left:1018px;top:774px;width:1px;height:21px;background:#ededed"></div>
<div style="left:1118px;top:774px;width:1px;height:21px;background:#ededed"></div>
<div style="left:260px;top:777px;width:13px;height:13px;border:1px solid #8a8a8a;box-sizing:border-box;background:linear-gradient(135deg,#c3c9d3 0%,#e3e6ea 50%,#f7f7f7 100%);box-shadow:inset 0 0 0 1px #fff,inset 0 0 0 2px #d9dde3"></div>
<div class="t clip" style="left:287px;top:778px;width:92px">6</div>
<div class="t clip" style="left:625px;top:778px;width:92px">Прямые</div>
<div class="t" style="left:718px;top:778px;width:94px;text-align:right">0,00</div>
<div class="t clip" style="left:825px;top:778px;width:92px">RUB</div>
<div class="t" style="left:918px;top:778px;width:94px;text-align:right">0,00000</div>
<div class="t" style="left:1018px;top:778px;width:94px;text-align:right">0,00000</div>
<div style="left:257px;top:815px;width:861px;height:1px;background:#ededed"></div>
<div style="left:280px;top:795px;width:1px;height:21px;background:#ededed"></div>
<div style="left:380px;top:795px;width:1px;height:21px;background:#ededed"></div>
<div style="left:518px;top:795px;width:1px;height:21px;background:#ededed"></div>
<div style="left:618px;top:795px;width:1px;height:21px;background:#ededed"></div>
<div style="left:718px;top:795px;width:1px;height:21px;background:#ededed"></div>
<div style="left:818px;top:795px;width:1px;height:21px;background:#ededed"></div>
<div style="left:918px;top:795px;width:1px;height:21px;background:#ededed"></div>
<div style="left:1018px;top:795px;width:1px;height:21px;background:#ededed"></div>
<div style="left:1118px;top:795px;width:1px;height:21px;background:#ededed"></div>
<div style="left:260px;top:798px;width:13px;height:13px;border:1px solid #8a8a8a;box-sizing:border-box;background:linear-gradient(135deg,#c3c9d3 0%,#e3e6ea 50%,#f7f7f7 100%);box-shadow:inset 0 0 0 1px #fff,inset 0 0 0 2px #d9dde3"></div>
<div class="t clip" style="left:287px;top:799px;width:92px">7</div>
<div class="t clip" style="left:625px;top:799px;width:92px">Прямые</div>
<div class="t" style="left:718px;top:799px;width:94px;text-align:right">70 000 000,00</div>
<div class="t clip" style="left:825px;top:799px;width:92px">RUB</div>
<div class="t" style="left:918px;top:799px;width:94px;text-align:right">0,00000</div>
<div class="t" style="left:1018px;top:799px;width:94px;text-align:right">0,00000</div>
<div style="left:257px;top:836px;width:861px;height:1px;background:#ededed"></div>
<div style="left:280px;top:816px;width:1px;height:21px;background:#ededed"></div>
<div style="left:380px;top:816px;width:1px;height:21px;background:#ededed"></div>
<div style="left:518px;top:816px;width:1px;height:21px;background:#ededed"></div>
<div style="left:618px;top:816px;width:1px;height:21px;background:#ededed"></div>
<div style="left:718px;top:816px;width:1px;height:21px;background:#ededed"></div>
<div style="left:818px;top:816px;width:1px;height:21px;background:#ededed"></div>
<div style="left:918px;top:816px;width:1px;height:21px;background:#ededed"></div>
<div style="left:1018px;top:816px;width:1px;height:21px;background:#ededed"></div>
<div style="left:1118px;top:816px;width:1px;height:21px;background:#ededed"></div>
<div style="left:260px;top:819px;width:13px;height:13px;border:1px solid #8a8a8a;box-sizing:border-box;background:linear-gradient(135deg,#c3c9d3 0%,#e3e6ea 50%,#f7f7f7 100%);box-shadow:inset 0 0 0 1px #fff,inset 0 0 0 2px #d9dde3"></div>
<div class="t clip" style="left:287px;top:820px;width:92px">8</div>
<div class="t clip" style="left:625px;top:820px;width:92px">Прямые</div>
<div class="t" style="left:718px;top:820px;width:94px;text-align:right">0,00</div>
<div class="t clip" style="left:825px;top:820px;width:92px">RUB</div>
<div class="t" style="left:918px;top:820px;width:94px;text-align:right">0,00000</div>
<div class="t" style="left:1018px;top:820px;width:94px;text-align:right">0,00000</div>
<div style="left:257px;top:857px;width:861px;height:1px;background:#ededed"></div>
<div style="left:280px;top:837px;width:1px;height:21px;background:#ededed"></div>
<div style="left:380px;top:837px;width:1px;height:21px;background:#ededed"></div>
<div style="left:518px;top:837px;width:1px;height:21px;background:#ededed"></div>
<div style="left:618px;top:837px;width:1px;height:21px;background:#ededed"></div>
<div style="left:718px;top:837px;width:1px;height:21px;background:#ededed"></div>
<div style="left:818px;top:837px;width:1px;height:21px;background:#ededed"></div>
<div style="left:918px;top:837px;width:1px;height:21px;background:#ededed"></div>
<div style="left:1018px;top:837px;width:1px;height:21px;background:#ededed"></div>
<div style="left:1118px;top:837px;width:1px;height:21px;background:#ededed"></div>
<div style="left:260px;top:840px;width:13px;height:13px;border:1px solid #8a8a8a;box-sizing:border-box;background:linear-gradient(135deg,#c3c9d3 0%,#e3e6ea 50%,#f7f7f7 100%);box-shadow:inset 0 0 0 1px #fff,inset 0 0 0 2px #d9dde3"></div>
<div class="t clip" style="left:287px;top:841px;width:92px">9</div>
<div class="t clip" style="left:625px;top:841px;width:92px">Косвенные</div>
<div class="t" style="left:718px;top:841px;width:94px;text-align:right">4 025 000,00</div>
<div class="t clip" style="left:825px;top:841px;width:92px">RUB</div>
<div class="t" style="left:918px;top:841px;width:94px;text-align:right">100,00000</div>
<div class="t" style="left:1018px;top:841px;width:94px;text-align:right">100,00000</div>
<div style="left:257px;top:878px;width:861px;height:1px;background:#ededed"></div>
<div style="left:280px;top:858px;width:1px;height:21px;background:#ededed"></div>
<div style="left:380px;top:858px;width:1px;height:21px;background:#ededed"></div>
<div style="left:518px;top:858px;width:1px;height:21px;background:#ededed"></div>
<div style="left:618px;top:858px;width:1px;height:21px;background:#ededed"></div>
<div style="left:718px;top:858px;width:1px;height:21px;background:#ededed"></div>
<div style="left:818px;top:858px;width:1px;height:21px;background:#ededed"></div>
<div style="left:918px;top:858px;width:1px;height:21px;background:#ededed"></div>
<div style="left:1018px;top:858px;width:1px;height:21px;background:#ededed"></div>
<div style="left:1118px;top:858px;width:1px;height:21px;background:#ededed"></div>
<div style="left:260px;top:861px;width:13px;height:13px;border:1px solid #8a8a8a;box-sizing:border-box;background:linear-gradient(135deg,#c3c9d3 0%,#e3e6ea 50%,#f7f7f7 100%);box-shadow:inset 0 0 0 1px #fff,inset 0 0 0 2px #d9dde3"></div>
<div class="t clip" style="left:287px;top:862px;width:92px">10</div>
<div class="t clip" style="left:625px;top:862px;width:92px">Прямые</div>
<div class="t" style="left:718px;top:862px;width:94px;text-align:right">143 640 000,00</div>
<div class="t clip" style="left:825px;top:862px;width:92px">RUB</div>
<div class="t" style="left:918px;top:862px;width:94px;text-align:right">100,00000</div>
<div class="t" style="left:1018px;top:862px;width:94px;text-align:right">100,00000</div>
<div style="left:257px;top:899px;width:861px;height:1px;background:#ededed"></div>
<div style="left:280px;top:879px;width:1px;height:21px;background:#ededed"></div>
<div style="left:380px;top:879px;width:1px;height:21px;background:#ededed"></div>
<div style="left:518px;top:879px;width:1px;height:21px;background:#ededed"></div>
<div style="left:618px;top:879px;width:1px;height:21px;background:#ededed"></div>
<div style="left:718px;top:879px;width:1px;height:21px;background:#ededed"></div>
<div style="left:818px;top:879px;width:1px;height:21px;background:#ededed"></div>
<div style="left:918px;top:879px;width:1px;height:21px;background:#ededed"></div>
<div style="left:1018px;top:879px;width:1px;height:21px;background:#ededed"></div>
<div style="left:1118px;top:879px;width:1px;height:21px;background:#ededed"></div>
<div style="left:260px;top:882px;width:13px;height:13px;border:1px solid #8a8a8a;box-sizing:border-box;background:linear-gradient(135deg,#c3c9d3 0%,#e3e6ea 50%,#f7f7f7 100%);box-shadow:inset 0 0 0 1px #fff,inset 0 0 0 2px #d9dde3"></div>
<div class="t clip" style="left:287px;top:883px;width:92px">11</div>
<div class="t clip" style="left:625px;top:883px;width:92px">Прямые</div>
<div class="t" style="left:718px;top:883px;width:94px;text-align:right">0,00</div>
<div class="t clip" style="left:825px;top:883px;width:92px">RUB</div>
<div class="t" style="left:918px;top:883px;width:94px;text-align:right">0,00000</div>
<div class="t" style="left:1018px;top:883px;width:94px;text-align:right">0,00000</div>
<div style="left:257px;top:920px;width:861px;height:1px;background:#ededed"></div>
<div style="left:280px;top:900px;width:1px;height:21px;background:#ededed"></div>
<div style="left:380px;top:900px;width:1px;height:21px;background:#ededed"></div>
<div style="left:518px;top:900px;width:1px;height:21px;background:#ededed"></div>
<div style="left:618px;top:900px;width:1px;height:21px;background:#ededed"></div>
<div style="left:718px;top:900px;width:1px;height:21px;background:#ededed"></div>
<div style="left:818px;top:900px;width:1px;height:21px;background:#ededed"></div>
<div style="left:918px;top:900px;width:1px;height:21px;background:#ededed"></div>
<div style="left:1018px;top:900px;width:1px;height:21px;background:#ededed"></div>
<div style="left:1118px;top:900px;width:1px;height:21px;background:#ededed"></div>
<div style="left:260px;top:903px;width:13px;height:13px;border:1px solid #8a8a8a;box-sizing:border-box;background:linear-gradient(135deg,#c3c9d3 0%,#e3e6ea 50%,#f7f7f7 100%);box-shadow:inset 0 0 0 1px #fff,inset 0 0 0 2px #d9dde3"></div>
<div class="t clip" style="left:287px;top:904px;width:92px">12</div>
<div class="t clip" style="left:387px;top:904px;width:130px">12 Комм. расходы</div>
<div class="t clip" style="left:525px;top:904px;width:92px">Нет</div>
<div class="t clip" style="left:625px;top:904px;width:92px">Прямые</div>
<div class="t" style="left:718px;top:904px;width:94px;text-align:right">0,00</div>
<div class="t clip" style="left:825px;top:904px;width:92px">RUB</div>
<div class="t" style="left:918px;top:904px;width:94px;text-align:right">0,00000</div>
<div class="t" style="left:1018px;top:904px;width:94px;text-align:right">0,00000</div>
<div style="left:257px;top:941px;width:861px;height:1px;background:#ededed"></div>
<div style="left:280px;top:921px;width:1px;height:21px;background:#ededed"></div>
<div style="left:380px;top:921px;width:1px;height:21px;background:#ededed"></div>
<div style="left:518px;top:921px;width:1px;height:21px;background:#ededed"></div>
<div style="left:618px;top:921px;width:1px;height:21px;background:#ededed"></div>
<div style="left:718px;top:921px;width:1px;height:21px;background:#ededed"></div>
<div style="left:818px;top:921px;width:1px;height:21px;background:#ededed"></div>
<div style="left:918px;top:921px;width:1px;height:21px;background:#ededed"></div>
<div style="left:1018px;top:921px;width:1px;height:21px;background:#ededed"></div>
<div style="left:1118px;top:921px;width:1px;height:21px;background:#ededed"></div>
<div style="left:260px;top:924px;width:13px;height:13px;border:1px solid #8a8a8a;box-sizing:border-box;background:linear-gradient(135deg,#c3c9d3 0%,#e3e6ea 50%,#f7f7f7 100%);box-shadow:inset 0 0 0 1px #fff,inset 0 0 0 2px #d9dde3"></div>
<div class="t clip" style="left:287px;top:925px;width:92px">13</div>
<div class="t clip" style="left:387px;top:925px;width:130px">13 Прибыль</div>
<div class="t clip" style="left:525px;top:925px;width:92px">Нет</div>
<div class="t clip" style="left:625px;top:925px;width:92px">Косвенные</div>
<div class="t" style="left:718px;top:925px;width:94px;text-align:right">21 546 000,00</div>
<div class="t clip" style="left:825px;top:925px;width:92px">RUB</div>
<div class="t" style="left:918px;top:925px;width:94px;text-align:right">15,00000</div>
<div class="t" style="left:1018px;top:925px;width:94px;text-align:right">15,00000</div>
<div style="left:257px;top:962px;width:861px;height:1px;background:#ededed"></div>
<div style="left:280px;top:942px;width:1px;height:21px;background:#ededed"></div>
<div style="left:380px;top:942px;width:1px;height:21px;background:#ededed"></div>
<div style="left:518px;top:942px;width:1px;height:21px;background:#ededed"></div>
<div style="left:618px;top:942px;width:1px;height:21px;background:#ededed"></div>
<div style="left:718px;top:942px;width:1px;height:21px;background:#ededed"></div>
<div style="left:818px;top:942px;width:1px;height:21px;background:#ededed"></div>
<div style="left:918px;top:942px;width:1px;height:21px;background:#ededed"></div>
<div style="left:1018px;top:942px;width:1px;height:21px;background:#ededed"></div>
<div style="left:1118px;top:942px;width:1px;height:21px;background:#ededed"></div>
<div style="left:260px;top:945px;width:13px;height:13px;border:1px solid #8a8a8a;box-sizing:border-box;background:linear-gradient(135deg,#c3c9d3 0%,#e3e6ea 50%,#f7f7f7 100%);box-shadow:inset 0 0 0 1px #fff,inset 0 0 0 2px #d9dde3"></div>
<div class="t clip" style="left:287px;top:946px;width:92px">14</div>
<div class="t clip" style="left:387px;top:946px;width:130px">14 Цена без НДС</div>
<div class="t clip" style="left:525px;top:946px;width:92px">Да</div>
<div class="t clip" style="left:625px;top:946px;width:92px">Косвенные</div>
<div class="t" style="left:718px;top:946px;width:94px;text-align:right">165 186 000,00</div>
<div class="t clip" style="left:825px;top:946px;width:92px">RUB</div>
<div class="t" style="left:918px;top:946px;width:94px;text-align:right">100,00000</div>
<div class="t" style="left:1018px;top:946px;width:94px;text-align:right">100,00000</div>
<div style="left:257px;top:983px;width:861px;height:1px;background:#ededed"></div>
<div style="left:280px;top:963px;width:1px;height:21px;background:#ededed"></div>
<div style="left:380px;top:963px;width:1px;height:21px;background:#ededed"></div>
<div style="left:518px;top:963px;width:1px;height:21px;background:#ededed"></div>
<div style="left:618px;top:963px;width:1px;height:21px;background:#ededed"></div>
<div style="left:718px;top:963px;width:1px;height:21px;background:#ededed"></div>
<div style="left:818px;top:963px;width:1px;height:21px;background:#ededed"></div>
<div style="left:918px;top:963px;width:1px;height:21px;background:#ededed"></div>
<div style="left:1018px;top:963px;width:1px;height:21px;background:#ededed"></div>
<div style="left:1118px;top:963px;width:1px;height:21px;background:#ededed"></div>
<div style="left:260px;top:966px;width:13px;height:13px;border:1px solid #8a8a8a;box-sizing:border-box;background:linear-gradient(135deg,#c3c9d3 0%,#e3e6ea 50%,#f7f7f7 100%);box-shadow:inset 0 0 0 1px #fff,inset 0 0 0 2px #d9dde3"></div>
<div class="t clip" style="left:287px;top:967px;width:92px">16</div>
<div class="t clip" style="left:387px;top:967px;width:130px">16 Цена с НДС</div>
<div class="t clip" style="left:525px;top:967px;width:92px">Нет</div>
<div class="t clip" style="left:625px;top:967px;width:92px">Косвенные</div>
<div class="t" style="left:718px;top:967px;width:94px;text-align:right">165 186 000,00</div>
<div class="t clip" style="left:825px;top:967px;width:92px">RUB</div>
<div class="t" style="left:918px;top:967px;width:94px;text-align:right">100,00000</div>
<div class="t" style="left:1018px;top:967px;width:94px;text-align:right">100,00000</div>
<div style="left:251px;top:657px;width:5px;height:31px;background:#dcdcdc"></div>
<svg style="position:absolute;left:252px;top:669px" width="4" height="7"><path d="M3.5 0V6.5L0 3.2Z" fill="#222"/></svg>
<div style="left:338px;top:576px;width:264px;height:317px;background:#f0f0f0;border:1px solid #99bbe8;box-sizing:border-box;box-shadow:2px 3px 6px rgba(0,0,0,0.28)"></div>
<div style="left:365px;top:579px;width:1px;height:101px;background:#e0e0e0"></div>
<div style="left:366px;top:579px;width:1px;height:101px;background:#fff"></div>
<div style="left:365px;top:684px;width:1px;height:27px;background:#e0e0e0"></div>
<div style="left:366px;top:684px;width:1px;height:27px;background:#fff"></div>
<div style="left:365px;top:715px;width:1px;height:27px;background:#e0e0e0"></div>
<div style="left:366px;top:715px;width:1px;height:27px;background:#fff"></div>
<div style="left:365px;top:746px;width:1px;height:52px;background:#e0e0e0"></div>
<div style="left:366px;top:746px;width:1px;height:52px;background:#fff"></div>
<div style="left:365px;top:802px;width:1px;height:27px;background:#e0e0e0"></div>
<div style="left:366px;top:802px;width:1px;height:27px;background:#fff"></div>
<div style="left:365px;top:833px;width:1px;height:27px;background:#e0e0e0"></div>
<div style="left:366px;top:833px;width:1px;height:27px;background:#fff"></div>
<div style="left:365px;top:864px;width:1px;height:26px;background:#e0e0e0"></div>
<div style="left:366px;top:864px;width:1px;height:26px;background:#fff"></div>
<div style="left:341px;top:681px;width:258px;height:1px;background:#e0e0e0"></div>
<div style="left:341px;top:682px;width:258px;height:1px;background:#fff"></div>
<div style="left:341px;top:712px;width:258px;height:1px;background:#e0e0e0"></div>
<div style="left:341px;top:713px;width:258px;height:1px;background:#fff"></div>
<div style="left:341px;top:743px;width:258px;height:1px;background:#e0e0e0"></div>
<div style="left:341px;top:744px;width:258px;height:1px;background:#fff"></div>
<div style="left:341px;top:799px;width:258px;height:1px;background:#e0e0e0"></div>
<div style="left:341px;top:800px;width:258px;height:1px;background:#fff"></div>
<div style="left:341px;top:830px;width:258px;height:1px;background:#e0e0e0"></div>
<div style="left:341px;top:831px;width:258px;height:1px;background:#fff"></div>
<div style="left:341px;top:861px;width:258px;height:1px;background:#e0e0e0"></div>
<div style="left:341px;top:862px;width:258px;height:1px;background:#fff"></div>
<div class="t" style="left:372px;top:586px;color:#222;">Добавить...</div>
<div class="t" style="left:483px;top:586px;width:100px;text-align:right;color:#222">Ins</div>
<svg style="position:absolute;left:340px;top:582px" width="24" height="20" viewBox="0 0 24 20"><path d="M6.5 1.5H14.5L17.5 4.5V16.5H6.5Z" fill="url(#dg)" stroke="#8d9796"/><path d="M14.5 1.5V4.5H17.5" fill="#fff" stroke="#a9b1b0"/><path d="M6 17.5H18" stroke="#000" stroke-opacity="0.08"/></svg>
<div class="t" style="left:372px;top:611px;color:#222;">Размножить...</div>
<div class="t" style="left:483px;top:611px;width:100px;text-align:right;color:#222">Ctrl+F3</div>
<svg style="position:absolute;left:340px;top:607px" width="24" height="20" viewBox="0 0 24 20"><path d="M6.5 1.5H14.5L17.5 4.5V16.5H6.5Z" fill="url(#dg)" stroke="#8d9796"/><path d="M14.5 1.5V4.5H17.5" fill="#fff" stroke="#a9b1b0"/><path d="M6 17.5H18" stroke="#000" stroke-opacity="0.08"/><path d="M16.5 10V17M13 13.5H20" stroke="#1f9a1f" stroke-width="3.2"/><path d="M16.5 11V16M14 13.5H19" stroke="#62d862" stroke-width="1.3"/></svg>
<div class="t" style="left:372px;top:636px;font-weight:bold;font-size:11.5px;color:#111;">Исправить...</div>
<div class="t" style="left:483px;top:636px;width:100px;text-align:right;font-weight:bold;color:#222">F2</div>
<svg style="position:absolute;left:340px;top:632px" width="24" height="20" viewBox="0 0 24 20"><path d="M8.5 1.5H16.5L19.5 4.5V16.5H8.5Z" fill="url(#dg)" stroke="#8d9796"/><path d="M16.5 1.5V4.5H19.5" fill="#fff" stroke="#a9b1b0"/><rect x="4.5" y="6.5" width="8" height="5" fill="#fbf6dc" stroke="#8a95a8"/><rect x="6" y="8.2" width="5" height="1.8" fill="#2444d8"/><path d="M12 4.5H16M14 4.5V14.5M12 14.5H16" stroke="#333" stroke-width="0.9"/></svg>
<div class="t" style="left:372px;top:661px;color:#222;">Удалить</div>
<div class="t" style="left:483px;top:661px;width:100px;text-align:right;color:#222">Del</div>
<svg style="position:absolute;left:340px;top:657px" width="24" height="20" viewBox="0 0 24 20"><path d="M6.5 1.5H14.5L17.5 4.5V16.5H6.5Z" fill="url(#dg)" stroke="#8d9796"/><path d="M14.5 1.5V4.5H17.5" fill="#fff" stroke="#a9b1b0"/><path d="M6 17.5H18" stroke="#000" stroke-opacity="0.08"/><rect x="13" y="12" width="7" height="3" rx="1" fill="#d8303a"/><rect x="13.5" y="12.4" width="6" height="0.9" fill="#f27a80"/></svg>
<div class="t" style="left:372px;top:692px;color:#222;">Обновить</div>
<div class="t" style="left:483px;top:692px;width:100px;text-align:right;color:#222">F5</div>
<svg style="position:absolute;left:340px;top:689px" width="24" height="18" viewBox="0 0 24 18"><path d="M17.5 6.5C16 1.2 9.5 0.5 6.8 5.8" fill="none" stroke="#5fcf48" stroke-width="2.6"/><path d="M3.6 9.2L4.8 1.8L11.2 7.8Z" fill="#5fcf48"/><path d="M6.5 10C8 15.5 14.5 15.8 17 10.2" fill="none" stroke="#3aab2c" stroke-width="2.6"/><path d="M20.2 7L19.2 14.2L12.8 8.2Z" fill="#2e9a22"/></svg>
<div class="t" style="left:372px;top:723px;color:#222;">Действующая...</div>
<div class="t" style="left:372px;top:754px;color:#222;">ЦИТК. Пересчитать косвенные затраты...</div>
<div class="t" style="left:372px;top:779px;color:#222;">ЦИТК. Сформировать...</div>
<div class="t" style="left:372px;top:810px;color:#222;">Обмен</div>
<svg style="position:absolute;left:340px;top:806px" width="24" height="18" viewBox="0 0 24 18"><path d="M5.5 2.5H10L12.5 5V13.5H5.5Z" fill="#f2f6fb" stroke="#6a7fb2"/><path d="M11.5 6.5H16L18.5 9V16.5H11.5Z" fill="#f2f6fb" stroke="#6a7fb2"/><path d="M8.5 9.5V16" stroke="#23a323" stroke-width="2.4"/><path d="M5 11L8.5 7L12 11Z" fill="#2fbf2f"/><path d="M15.5 2V8.5" stroke="#23a323" stroke-width="2.4"/><path d="M12 7L15.5 11L19 7Z" fill="#2fbf2f"/></svg>
<div class="t" style="left:372px;top:841px;color:#222;">Панель инструментов</div>
<div style="left:345px;top:840px;width:13px;height:13px;border:1px solid #8a8a8a;box-sizing:border-box;background:linear-gradient(135deg,#c3c9d3 0%,#e3e6ea 50%,#f7f7f7 100%);box-shadow:inset 0 0 0 1px #fff,inset 0 0 0 2px #d9dde3"></div>
<div class="t" style="left:372px;top:872px;color:#222;">Настройки...</div>
<div class="t" style="left:483px;top:872px;width:100px;text-align:right;color:#222">Alt+Enter</div>
<svg style="position:absolute;left:340px;top:867px" width="24" height="20" viewBox="0 0 24 20"><path d="M6 15.5L12.5 9.5" stroke="#4f7fcf" stroke-width="5" stroke-linecap="round"/><path d="M6 15.5L12.5 9.5" stroke="#8fb4ee" stroke-width="2.6" stroke-linecap="round"/><path d="M11.5 10.5L13 8C12.5 5 14.5 2.5 17.5 2.5L15.8 4.8L17 7L19.5 6.8L20.5 4.5C21.5 7.5 19.5 10 16.5 10L14 11.5Z" fill="#b9b9b9" stroke="#7d7d7d"/></svg>
<svg style="position:absolute;left:587px;top:810px" width="6" height="9"><path d="M0.5 0.5V8.5L5.5 4.5Z" fill="#3b7bd4"/></svg>
<svg style="position:absolute;left:355px;top:730px" width="260" height="60"><rect x="11.1" y="12.9" width="232.6" height="31.6" rx="8" ry="8" fill="none" stroke="#ff0000" stroke-width="5.4"/></svg>
</body></html>
